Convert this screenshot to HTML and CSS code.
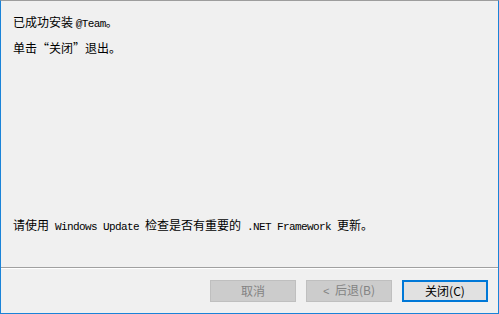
FILE: index.html
```html
<!DOCTYPE html>
<html lang="zh-CN">
<head>
<meta charset="utf-8">
<link rel="stylesheet" href="styles.css">
</head>
<body>
<div class="window">
  <div class="content">
    <p class="line">已成功安装 <span class="lat">@Team</span>。</p>
    <p class="line">单击“关闭”退出。</p>
    <p class="line bottom">请使用<span class="lat"> Windows Update </span>检查是否有重要的<span class="lat"> .NET Framework </span>更新。</p>
  </div>
  <div class="footer">
    <button class="btn disabled">取消</button>
    <button class="btn disabled"><span class="lat">&lt; </span>后退(B)</button>
    <button class="btn default">关闭(C)</button>
  </div>
</div>
</body>
</html>
```
FILE: styles.css
```css
html, body {
  margin: 0;
  padding: 0;
  background: #f0f0f0;
}
.window {
  width: 499px;
  height: 314px;
  box-sizing: border-box;
  border: 1px solid #1a83d8;
  border-top-color: #9d9d9d;
  display: flex;
  flex-direction: column;
  font-family: "Noto Sans CJK SC", "Liberation Sans", sans-serif;
  font-size: 12px;
  color: #000;
}
.content {
  flex: 1;
  display: flex;
  flex-direction: column;
  padding: 13px 12px 32px 12px;
}
.line {
  margin: 0 0 8px 0;
  line-height: 16px;
  white-space: nowrap;
}
.line.bottom {
  margin-top: auto;
  margin-bottom: 0;
}
.lat {
  font-family: "Liberation Mono", monospace;
  font-size: 11px;
  letter-spacing: -0.6px;
  white-space: pre;
}
.footer {
  border-top: 1px solid #a0a0a0;
  box-shadow: inset 0 1px 0 #ffffff;
  padding: 12px 10px 11px 0;
  display: flex;
  justify-content: flex-end;
  gap: 10px;
}
.btn {
  width: 86px;
  height: 22px;
  box-sizing: border-box;
  padding: 0;
  margin: 0;
  font-family: "Noto Sans CJK SC", "Liberation Sans", sans-serif;
  font-size: 12px;
  line-height: 16px;
}
.btn.disabled {
  background: #cccccc;
  border: 1px solid #bfbfbf;
  color: #838383;
}
.btn.default {
  background: #e1e1e1;
  border: 2px solid #0078d7;
  color: #000;
}
```
